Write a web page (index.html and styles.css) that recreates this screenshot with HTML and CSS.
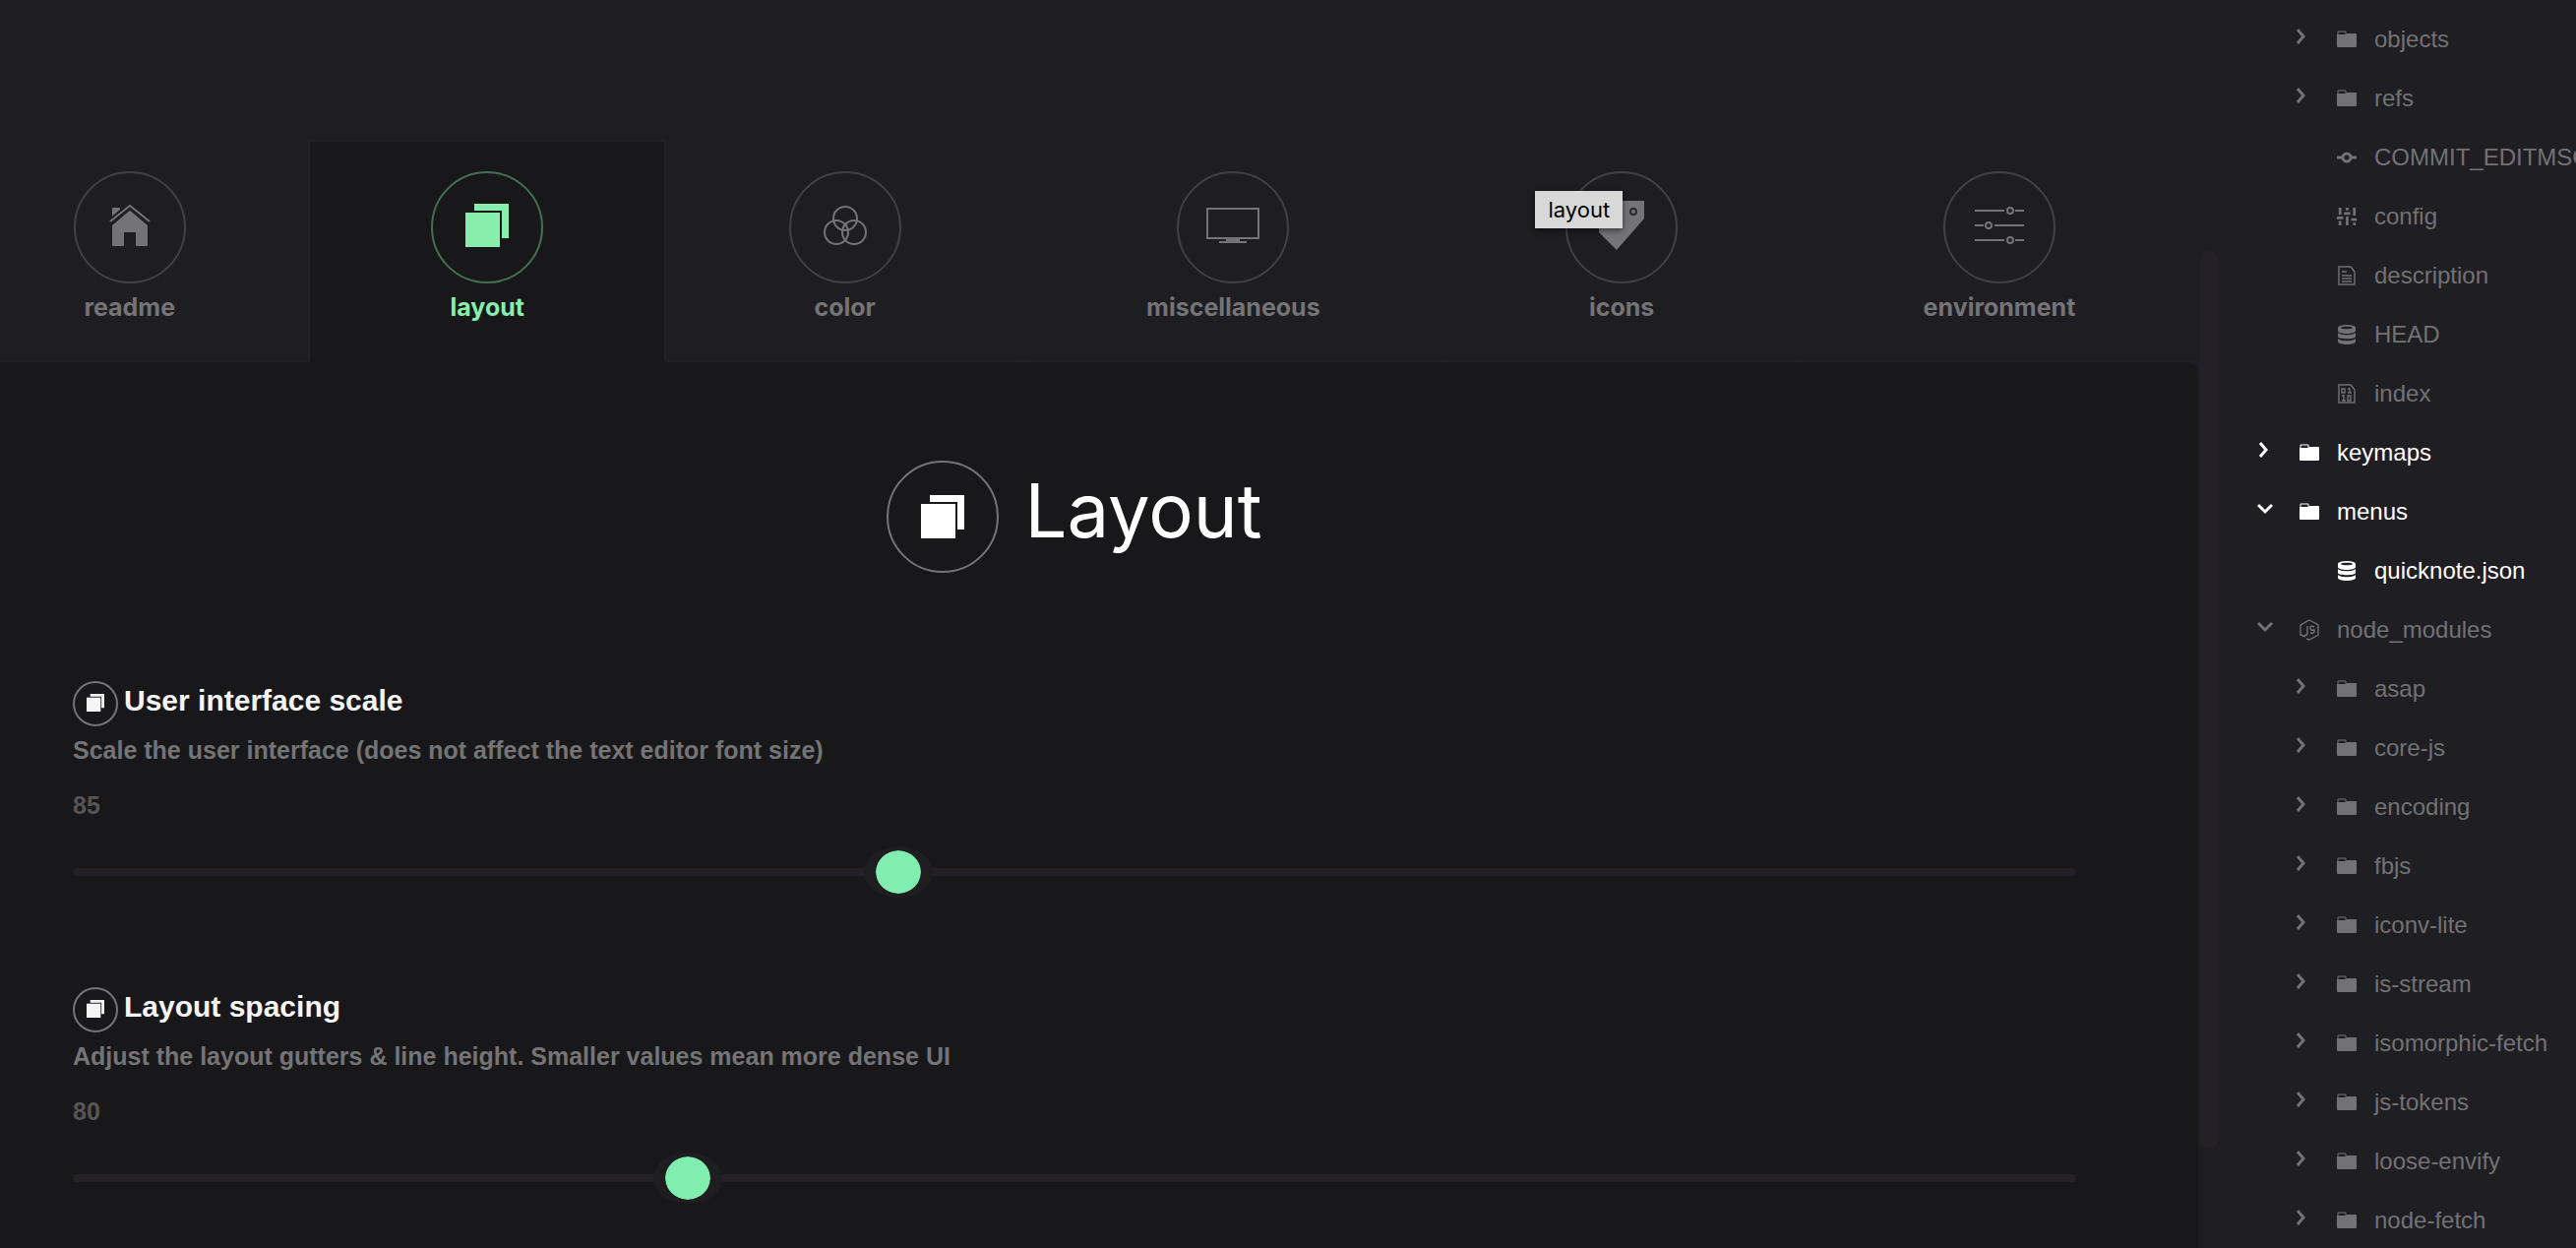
FILE: index.html
```html
<!DOCTYPE html>
<html lang="en">
<head>
<meta charset="utf-8">
<title>Theme settings</title>
<link rel="stylesheet" href="styles.css">
</head>
<body>
<svg class="defs" aria-hidden="true">
  <symbol id="stack" viewBox="0 0 44 44"><path d="M9 0h35v35h-7V7H9z"/><path d="M0 9h35v35H0z"/></symbol>
  <symbol id="folder" viewBox="0 0 20 18"><path d="M1 4V1h8v3" fill="none" stroke="currentColor"/><path d="M0 4h9l1-1h9q1 0 1 1v12q0 1-1 1H1q-1 0-1-1z"/></symbol>
  <symbol id="db" viewBox="0 0 18 20"><path fill-rule="evenodd" d="M0 3C0-1 18-1 18 3v3c0 4-18 4-18 0zM3 3c0 1.700 12 1.700 12 0S3 1.300 3 3z"/><path d="M0 8c2 3 16 3 18 0v4c0 3-18 3-18 0zM0 14c2 3 16 3 18 0v3c0 4-18 4-18 0z"/></symbol>
  <symbol id="right" viewBox="0 0 16 16"><path d="M3 1l6 7-6 7" fill="none" stroke="currentColor" stroke-width="3"/></symbol>
  <symbol id="down" viewBox="0 0 16 16"><path d="M1 4l7 7 7-7" fill="none" stroke="currentColor" stroke-width="3"/></symbol>
</svg>
<div class="app">
  <main class="main">
    <nav class="tabs">
      <button class="tab" type="button"><span class="ring"><svg width="42" height="42" viewBox="0 0 42 42"><path d="M3 18V3h8v7zM21 5l18 15v22H27V28H15v14H3V20z"/><path d="M1 18L21 1l20 17" fill="none" stroke="#1e1d22" stroke-width="7"/><path d="M1 17L21 1l20 16" fill="none" stroke="currentColor" stroke-width="2"/></svg></span>readme</button>
      <button class="tab active" type="button"><span class="ring"><svg width="44" height="44"><use href="#stack"/></svg></span>layout</button>
      <button class="tab" type="button"><span class="ring"><svg width="44" height="40" viewBox="0 0 44 40" fill="none" stroke="currentColor" stroke-width="2"><circle cx="22" cy="13" r="12"/><circle cx="13" cy="27" r="12"/><circle cx="31" cy="27" r="12"/></svg></span>color</button>
      <button class="tab" type="button"><span class="ring"><svg width="54" height="36" viewBox="0 0 54 36"><path d="M1 1h52v30H1z" fill="none" stroke="currentColor" stroke-width="2"/><path d="M20 32h14v2h7v2H13v-2h7z"/></svg></span>miscellaneous</button>
      <button class="tab" type="button"><span class="ring"><svg width="46" height="50" viewBox="0 0 46 50"><path d="M0 0h46v18L18 50 0 32z"/><circle cx="35" cy="11" r="3" fill="none" stroke="#2a292d" stroke-width="2"/></svg></span>icons<span class="tip" role="tooltip">layout</span></button>
      <button class="tab" type="button"><span class="ring"><svg width="50" height="38" viewBox="0 0 50 38" fill="none" stroke="currentColor" stroke-width="2"><path d="M0 4h30M41 4h9M0 19h9M20 19h30M0 34h30M41 34h9"/><circle cx="36" cy="4" r="3"/><circle cx="14" cy="19" r="3"/><circle cx="36" cy="34" r="3"/></svg></span>environment</button>
    </nav>
    <section class="panel">
      <h1 class="title"><span class="ring"><svg width="44" height="44"><use href="#stack"/></svg></span>Layout</h1>
      <div class="setting">
        <label class="name" for="scale"><span class="ring small"><svg width="18" height="18"><use href="#stack"/></svg></span>User interface scale</label>
        <p class="desc">Scale the user interface (does not affect the text editor font size)</p>
        <output class="value" for="scale">85</output>
        <input class="slider" id="scale" type="range" min="0" max="1000" value="409">
      </div>
      <div class="setting">
        <label class="name" for="spacing"><span class="ring small"><svg width="18" height="18"><use href="#stack"/></svg></span>Layout spacing</label>
        <p class="desc">Adjust the layout gutters &amp; line height. Smaller values mean more dense UI</p>
        <output class="value" for="spacing">80</output>
        <input class="slider" id="spacing" type="range" min="0" max="1000" value="300">
      </div>
    </section>
  </main>
  <div class="scroll"><div class="handle"></div></div>
  <aside class="tree">
    <ul>
      <li class="row deep"><svg class="chev"><use href="#right"/></svg><svg class="ico"><use href="#folder"/></svg>objects</li>
      <li class="row deep"><svg class="chev"><use href="#right"/></svg><svg class="ico"><use href="#folder"/></svg>refs</li>
      <li class="row deep"><svg class="chev"></svg><svg class="ico" viewBox="0 0 20 18"><path d="M0 9h5M15 9h5" stroke="currentColor" stroke-width="3"/><circle cx="10" cy="9" r="4" fill="none" stroke="currentColor" stroke-width="3"/></svg>COMMIT_EDITMSG</li>
      <li class="row deep"><svg class="chev"></svg><svg class="ico" viewBox="0 0 22 20"><path d="M2 0h3v8H2zM0 10h7v3H0zM2 15h3v5H2zM10 0h3v3h-3zM8 5h7v3H8zM10 10h3v10h-3zM18 0h3v9h-3zM16 12h6v3h-6zM18 17h3v3h-3z"/></svg>config</li>
      <li class="row deep"><svg class="chev"></svg><svg class="ico line" viewBox="0 0 18 20"><path d="M1 1h12l4 5v13H1zM4 6h5M4 10h10M4 13h10M4 16h10"/></svg>description</li>
      <li class="row deep"><svg class="chev"></svg><svg class="ico"><use href="#db"/></svg>HEAD</li>
      <li class="row deep"><svg class="chev"></svg><svg class="ico line" viewBox="0 0 18 20"><path d="M1 1h12l4 5v13H1zM4 5h3v4H4zM10 5h2v4M10 9h4M4 12h2v5M4 17h4M10 12h3v5h-3z"/></svg>index</li>
      <li class="row lit"><svg class="chev"><use href="#right"/></svg><svg class="ico"><use href="#folder"/></svg>keymaps</li>
      <li class="row lit"><svg class="chev"><use href="#down"/></svg><svg class="ico"><use href="#folder"/></svg>menus</li>
      <li class="row deep lit"><svg class="chev"></svg><svg class="ico"><use href="#db"/></svg>quicknote.json</li>
      <li class="row"><svg class="chev"><use href="#down"/></svg><svg class="ico tall line" viewBox="0 0 20 22"><path d="M6 18l-5-2V6l9-5 9 5v10l-9 5-3-1M8 7v8q0 2-3 1M15 8q-4-2-4 1t4 2q1 4-4 3"/></svg>node_modules</li>
      <li class="row deep"><svg class="chev"><use href="#right"/></svg><svg class="ico"><use href="#folder"/></svg>asap</li>
      <li class="row deep"><svg class="chev"><use href="#right"/></svg><svg class="ico"><use href="#folder"/></svg>core-js</li>
      <li class="row deep"><svg class="chev"><use href="#right"/></svg><svg class="ico"><use href="#folder"/></svg>encoding</li>
      <li class="row deep"><svg class="chev"><use href="#right"/></svg><svg class="ico"><use href="#folder"/></svg>fbjs</li>
      <li class="row deep"><svg class="chev"><use href="#right"/></svg><svg class="ico"><use href="#folder"/></svg>iconv-lite</li>
      <li class="row deep"><svg class="chev"><use href="#right"/></svg><svg class="ico"><use href="#folder"/></svg>is-stream</li>
      <li class="row deep"><svg class="chev"><use href="#right"/></svg><svg class="ico"><use href="#folder"/></svg>isomorphic-fetch</li>
      <li class="row deep"><svg class="chev"><use href="#right"/></svg><svg class="ico"><use href="#folder"/></svg>js-tokens</li>
      <li class="row deep"><svg class="chev"><use href="#right"/></svg><svg class="ico"><use href="#folder"/></svg>loose-envify</li>
      <li class="row deep"><svg class="chev"><use href="#right"/></svg><svg class="ico"><use href="#folder"/></svg>node-fetch</li>
    </ul>
  </aside>
</div>
</body>
</html>
```
FILE: styles.css
```css
* { box-sizing: border-box; }
body {
  margin: 0;
  background: #1e1d22;
  color: #747476;
  font-family: "Liberation Sans", Arial, sans-serif;
  overflow: hidden;
}
.defs { position: absolute; width: 0; height: 0; }
svg { fill: currentColor; flex: none; display: block; }
svg[fill="none"] { fill: none; }
.app { display: flex; height: 100vh; }
.main {
  flex: 1;
  min-width: 0;
  display: flex;
  flex-direction: column;
  padding-top: 142px;
  overflow: hidden;
}
.tabs { display: flex; margin-left: -50px; flex: none; }
.tab {
  flex: 1 1 auto;
  position: relative;
  display: flex;
  flex-direction: column;
  align-items: center;
  gap: 8px;
  height: 226px;
  padding: 30px 122px 0;
  border: 2px solid transparent;
  border-bottom-color: #222127;
  background: none;
  color: #747476;
  font: 700 25px/32px Inter, sans-serif;
}
.tab.active {
  background: #18181a;
  border-color: #222127;
  border-bottom-color: #18181a;
  color: #88eeac;
}
.ring {
  display: flex;
  flex: none;
  align-items: center;
  justify-content: center;
  width: 114px;
  height: 114px;
  border: 2px solid #414145;
  border-radius: 50%;
}
.tab .ring { padding-bottom: 4px; }
.tab.active .ring { border-color: #427054; }
.tip {
  position: absolute;
  left: 92px;
  top: 50px;
  padding: 0 13px;
  background: #d8d8d8;
  color: #000;
  font: 400 22px/38px Inter, sans-serif;
  box-shadow: 0 2px 6px #0008;
}
.panel {
  flex: 1;
  padding: 100px 124px 0 74px;
  background: #18181a;
  border-top-right-radius: 12px;
}
.title {
  display: flex;
  justify-content: center;
  gap: 26px;
  height: 114px;
  margin: 0 0 110px;
  color: #fff;
  font: 400 76px/100px Inter, sans-serif;
}
.title .ring { border-color: #747476; }
.setting { height: 311px; }
.name {
  display: flex;
  gap: 6px;
  color: #f5f5f5;
  font-size: 30px;
  font-weight: 700;
  line-height: 40px;
}
.ring.small { width: 46px; height: 46px; padding-bottom: 2px; border-color: #747476; }
.desc {
  margin: 6px 0 0;
  font-size: 25px;
  font-weight: 700;
  line-height: 36px;
}
.value {
  display: block;
  margin-top: 20px;
  color: #555557;
  font-size: 25px;
  font-weight: 700;
  line-height: 36px;
}
.slider {
  display: block;
  appearance: none;
  width: 100%;
  height: 8px;
  margin: 46px 0 0;
  border-radius: 4px;
  background: #232127;
}
.slider::-webkit-slider-thumb {
  appearance: none;
  width: 70px;
  height: 52px;
  border: solid #1e1d20;
  border-width: 4px 12px;
  border-radius: 50%;
  background: #80eeae;
  background-clip: padding-box;
}
.scroll { width: 20px; padding: 254px 0 100px 2px; flex: none; }
.handle { height: 100%; border-radius: 9px; background: #232127; }
.tree { width: 364px; flex: none; overflow: hidden; background: #1f1e23; }
.tree ul { margin: 0; padding: 10px 0 0; list-style: none; }
.row {
  display: flex;
  align-items: center;
  height: 60px;
  padding-left: 38px;
  color: #727275;
  font-size: 24px;
  white-space: nowrap;
}
.row.deep { padding-left: 76px; }
.row.lit { color: #fff; }
.chev { width: 16px; height: 16px; margin: 0 27px 6px 2px; }
.ico { width: 20px; height: 20px; margin-right: 18px; }
.ico.tall { height: 22px; }
.ico.line { fill: none; stroke: currentColor; stroke-width: 1.4; }
```
